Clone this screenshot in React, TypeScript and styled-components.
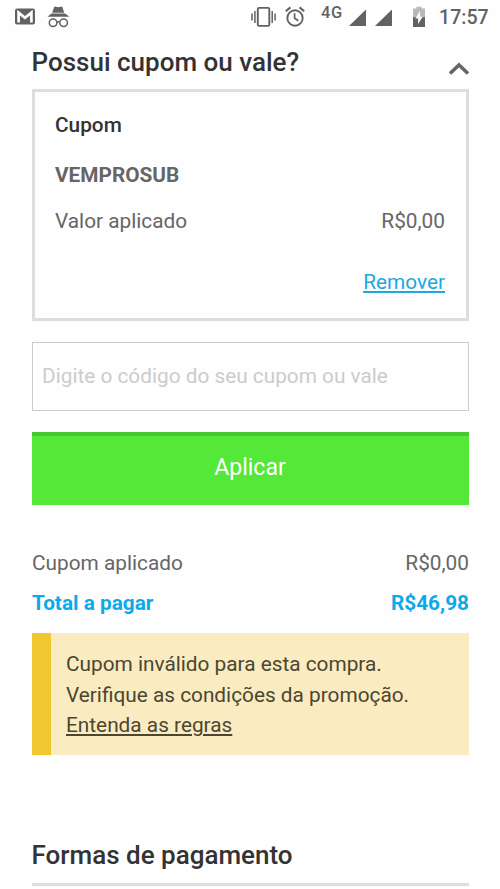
import React from "react";
import styled, { createGlobalStyle } from "styled-components";

const GlobalStyle = createGlobalStyle`
  * { box-sizing: border-box; }
  body { margin: 0; background: #fefefe; }
`;

const Screen = styled.div`
  height: 889px;
  overflow: hidden;
  background: #fefefe;
  color: #666;
  font-family: Roboto, sans-serif;
  font-size: 20.8px;
  line-height: 30px;
`;

const StatusBar = styled.header`
  display: flex;
  justify-content: space-between;
  height: 40px;
  padding: 0 11px 0 14px;
  color: #626262;
`;

const StatusGroup = styled.div`
  display: flex;
  align-items: flex-start;
`;

const Glyph = styled.svg<{ $gap?: number }>`
  display: block;
  flex: none;
  margin-left: ${(p) => p.$gap ?? 0}px;
  fill: currentColor;
`;

const Network = styled.span`
  width: 21px;
  margin: 4px 0 0 16px;
  font-size: 16.4px;
  font-weight: 500;
  line-height: 18px;
  letter-spacing: 0.6px;
  white-space: nowrap;
`;

const Clock = styled.time`
  width: 50px;
  margin: 6px 0 0 14px;
  font-size: 19.6px;
  font-weight: 500;
  line-height: 24px;
  white-space: nowrap;
`;

const Content = styled.main`
  padding: 0 31px 0 32px;
`;

const SectionHeader = styled.div`
  display: flex;
  justify-content: space-between;
  height: 49px;
`;

const Title = styled.h2`
  margin: 6px 0 0 -0.5px;
  color: #333;
  font-size: 26px;
  font-weight: 500;
  line-height: 32px;
  white-space: nowrap;
`;

const Chevron = styled.svg`
  width: 22px;
  height: 16px;
  margin: 21px -1px 0 0;
  fill: none;
  stroke: #666;
  stroke-width: 3.6;
`;

const Card = styled.section`
  height: 232px;
  padding: 18px 21px 0 20px;
  border: 3px solid #ddd;
`;

const CardTitle = styled.h3`
  margin: 0;
  color: #333;
  font-size: 20.8px;
  font-weight: 500;
  line-height: 30px;
`;

const CouponCode = styled.strong`
  display: block;
  margin-top: 20px;
  font-weight: 700;
`;

const Row = styled.div<{ $top: number; $total?: boolean }>`
  display: flex;
  justify-content: space-between;
  margin-top: ${(p) => p.$top}px;
  color: ${(p) => (p.$total ? "#0da9eb" : "inherit")};
  font-weight: ${(p) => (p.$total ? 700 : 400)};
`;

const RemoveLink = styled.a`
  display: block;
  width: max-content;
  margin: 31px 0 0 auto;
  color: #1ba9de;
  text-decoration: underline;
`;

const CodeInput = styled.input`
  display: block;
  width: 100%;
  height: 69px;
  margin-top: 21px;
  padding: 0 9px 2px;
  border: 1.5px solid #ccc;
  border-radius: 0;
  outline: 0;
  background: transparent;
  font: inherit;
  &::placeholder { color: #ccc; opacity: 1; }
`;

const ApplyButton = styled.button`
  display: block;
  width: 100%;
  height: 73px;
  margin-top: 21px;
  padding: 0 1px 6px 0;
  border: 0;
  border-top: 4px solid #47c830;
  background: #54e838;
  color: #fff;
  font: 400 23px/30px Roboto, sans-serif;
`;

const Alert = styled.aside`
  height: 122px;
  margin-top: 15px;
  padding: 16px 0 0 15px;
  border-left: 19px solid #f1c730;
  background: #faecc0;
  color: #4b4632;
  line-height: 30.6px;
`;

const Line = styled.p`
  margin: 0;
  white-space: nowrap;
`;

const RulesLink = styled.a`
  text-decoration: underline;
`;

const Payments = styled.section`
  height: 131px;
  padding-top: 78px;
  border-bottom: 3px solid #ddd;
`;

const StatusIcons = () => (
  <StatusBar>
    <StatusGroup>
      <Glyph width="22" height="34" viewBox="0 0 22 34">
        <rect x="1" y="8.6" width="20" height="16" rx="2" />
        <path d="M4.6 22.5V12.6L11 17.7l6.4-5.1v9.9" fill="none" stroke="#fefefe" strokeWidth="2.7" />
      </Glyph>
      <Glyph width="24" height="34" viewBox="0 0 24 34" $gap={10}>
        <path d="m8.4 6.5 3.9.8 3.9-.8 2 6.2H6.2zM5.5 13.6h13.6l4.4 3.2H1.4z" />
        <g fill="none" stroke="currentColor" strokeWidth="1.5">
          <circle cx="7.1" cy="22.7" r="3.8" />
          <circle cx="17.6" cy="22.7" r="3.8" />
          <path d="M10.9 22.2q1.4-1 2.9 0" />
        </g>
      </Glyph>
    </StatusGroup>
    <StatusGroup>
      <Glyph width="26" height="34" viewBox="0 0 26 34">
        <g fill="none" stroke="currentColor">
          <rect x="6.8" y="7.9" width="11.5" height="18" rx="1.2" strokeWidth="1.9" />
          <path d="M3.9 11v12M21.2 11v12M1 13.4v7.2M24.1 13.4v7.2" strokeWidth="1.5" />
        </g>
      </Glyph>
      <Glyph width="20" height="34" viewBox="0 0 20 34" $gap={8}>
        <g fill="none" stroke="currentColor" strokeWidth="1.9">
          <circle cx="10" cy="18" r="7.7" />
          <path d="m.8 11.2 4.6-3.8M19.2 11.2l-4.6-3.8" strokeWidth="2.1" />
          <path d="M9.6 13.2v5l3.8 2.6" strokeWidth="1.7" />
        </g>
      </Glyph>
      <Network>4G</Network>
      <Glyph width="17" height="34" viewBox="0 0 17 34" $gap={7}>
        <path d="M0 26 17 9.4V26z" />
      </Glyph>
      <Glyph width="17" height="34" viewBox="0 0 17 34" $gap={9}>
        <path d="M0 26 17 9.4V26z" />
      </Glyph>
      <Glyph width="12" height="34" viewBox="0 0 12 34" $gap={21}>
        <path d="M0 8.5h3.5V6.7h5v1.8H12V27H0z" fill="#b9b9b9" />
        <path d="M0 17.2h12V27H0z" />
        <path d="M7 11v5.8h2.7L5.1 24v-5.5H2.4z" fill="#fefefe" />
      </Glyph>
      <Clock>17:57</Clock>
    </StatusGroup>
  </StatusBar>
);

export default function App() {
  return (
    <Screen>
      <GlobalStyle />
      <StatusIcons />
      <Content>
        <SectionHeader>
          <Title>Possui cupom ou vale?</Title>
          <Chevron viewBox="0 0 22 16"><path d="m2 12.5 9-8.6 9 8.6" /></Chevron>
        </SectionHeader>
        <Card>
          <CardTitle>Cupom</CardTitle>
          <CouponCode>VEMPROSUB</CouponCode>
          <Row $top={16}><span>Valor aplicado</span><span>R$0,00</span></Row>
          <RemoveLink>Remover</RemoveLink>
        </Card>
        <CodeInput placeholder="Digite o código do seu cupom ou vale" />
        <ApplyButton>Aplicar</ApplyButton>
        <Row $top={43}><span>Cupom aplicado</span><span>R$0,00</span></Row>
        <Row $top={10} $total><span>Total a pagar</span><span>R$46,98</span></Row>
        <Alert>
          <Line>Cupom inválido para esta compra.</Line>
          <Line>Verifique as condições da promoção.</Line>
          <RulesLink>Entenda as regras</RulesLink>
        </Alert>
        <Payments><Title>Formas de pagamento</Title></Payments>
      </Content>
    </Screen>
  );
}
